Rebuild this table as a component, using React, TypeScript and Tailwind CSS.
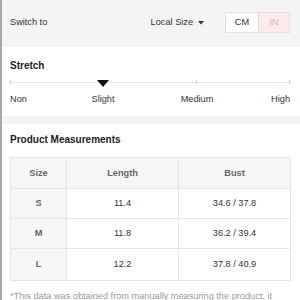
import React from "react";

const rows = [
  { size: "S", length: "11.4", bust: "34.6 / 37.8", h: "h-[30px]" },
  { size: "M", length: "11.8", bust: "36.2 / 39.4", h: "h-[30px]" },
  { size: "L", length: "12.2", bust: "37.8 / 40.9", h: "h-[32px]" },
];

export default function App() {
  return (
    <div className="w-[300px] h-[300px] overflow-hidden bg-white border-l-2 border-[#a8a8a8] font-['Liberation_Sans',Arial,sans-serif] text-[#333]">
      {/* header */}
      <div className="h-[47px] bg-[#f4f4f4] flex items-center pl-2 pr-[10px] pb-[3px]">
        <span className="text-[9.2px] leading-[11px] text-[#333]">Switch to</span>
        <div className="ml-auto flex items-center gap-[5px] mr-[21px]">
          <span className="text-[9.2px] leading-[11px] text-[#333]">Local Size</span>
          <svg width="6" height="4" viewBox="0 0 6 4" className="mt-[1px]">
            <path d="M0 0 L6 0 L3 3.5 Z" fill="#333" />
          </svg>
        </div>
        <div className="flex h-[21px] border border-[#e2e2e2] text-[9.2px] leading-[11px]">
          <div className="w-[32px] flex items-center justify-center bg-white text-[#333]">CM</div>
          <div className="w-[31px] flex items-center justify-center bg-[#fdeaea] border-l border-[#f3d2d2] text-[#eaaaaa]">IN</div>
        </div>
      </div>

      {/* stretch */}
      <div className="pl-2 pr-[10px] pt-[13px] pb-[11px]">
        <div className="text-[10px] leading-[12px] font-bold text-[#222]">Stretch</div>
        <div className="relative h-[8px] mt-[8px]">
          <div className="absolute left-0 right-0 top-[2px] h-px bg-[#e3e3e3]" />
          <div className="absolute left-0 top-0 h-[4px] w-px bg-[#d0d0d0]" />
          <div className="absolute left-[186px] top-0 h-[4px] w-px bg-[#d0d0d0]" />
          <div className="absolute right-0 top-0 h-[4px] w-px bg-[#d0d0d0]" />
          <svg width="12" height="7" viewBox="0 0 12 7" className="absolute left-[87px] top-0">
            <path d="M0 0 L12 0 L6 7 Z" fill="#111" />
          </svg>
        </div>
        <div className="grid grid-cols-[93px_0px_94px_0px_1fr] mt-[6px] text-[9.2px] leading-[11px] text-[#333]">
          <span>Non</span>
          <span className="flex justify-center">
            <span className="whitespace-nowrap">Slight</span>
          </span>
          <span></span>
          <span className="flex justify-center">
            <span className="whitespace-nowrap">Medium</span>
          </span>
          <span className="text-right">High</span>
        </div>
      </div>

      {/* separator band */}
      <div className="h-[8px] bg-[#f4f4f4]" />

      {/* product measurements */}
      <div className="pl-2 pr-[10px] pt-[10px]">
        <div className="text-[10px] leading-[12px] font-bold text-[#222]">Product Measurements</div>
        <div className="mt-[11px] w-[280px] border-t border-l border-[#e6e6e6] text-[9.2px] leading-[11px]">
          <div className="grid grid-cols-[56px_112px_112px] h-[31px] bg-[#f6f6f6] font-bold text-[#666]">
            <div className="flex items-center justify-center border-r border-b border-[#e6e6e6]">Size</div>
            <div className="flex items-center justify-center border-r border-b border-[#e6e6e6]">Length</div>
            <div className="flex items-center justify-center border-r border-b border-[#e6e6e6]">Bust</div>
          </div>
          {rows.map((r) => (
            <div key={r.size} className={`grid grid-cols-[56px_112px_112px] ${r.h}`}>
              <div className="flex items-center justify-center border-r border-b border-[#e6e6e6] bg-[#f6f6f6] font-bold text-[#666]">{r.size}</div>
              <div className="flex items-center justify-center border-r border-b border-[#e6e6e6] text-[#333]">{r.length}</div>
              <div className="flex items-center justify-center border-r border-b border-[#e6e6e6] text-[#333]">{r.bust}</div>
            </div>
          ))}
        </div>
        <div className="mt-[10px] text-[9.2px] leading-[11px] text-[#9a9a9a] whitespace-nowrap">
          *This data was obtained from manually measuring the product, it
        </div>
      </div>
    </div>
  );
}
